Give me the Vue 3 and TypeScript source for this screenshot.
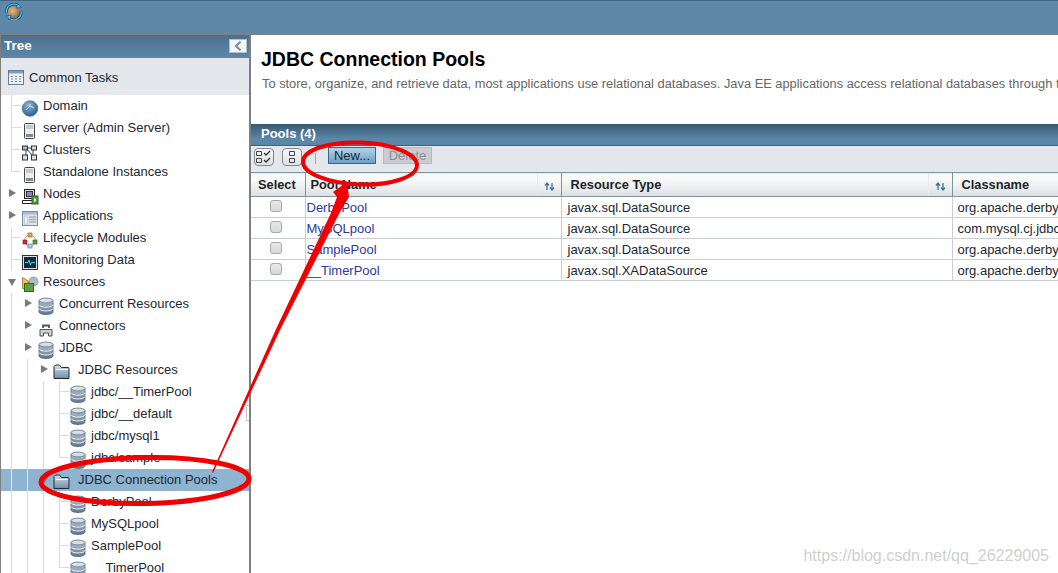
<script setup lang="ts">
type IconName = 'globe' | 'server' | 'cluster' | 'nodes' | 'apps' | 'life' | 'monitor' | 'res' | 'db' | 'conn' | 'folder'
interface TreeRow {
  label: string
  cells: string[]
  icon: IconName
  gap: number
  active?: boolean
}
const row = (label: string, cells: string, icon: IconName, gap = 4, active = false): TreeRow => ({
  label,
  cells: cells.split(''),
  icon,
  gap,
  active
})
const treeRows: TreeRow[] = [
  row('Domain', 'T', 'globe'),
  row('server (Admin Server)', 'T', 'server'),
  row('Clusters', 'T', 'cluster'),
  row('Standalone Instances', 'L', 'server'),
  row('Nodes', '>', 'nodes'),
  row('Applications', '>', 'apps'),
  row('Lifecycle Modules', 'T', 'life'),
  row('Monitoring Data', 'T', 'monitor'),
  row('Resources', 'v', 'res'),
  row('Concurrent Resources', '|>', 'db'),
  row('Connectors', '|>', 'conn'),
  row('JDBC', '|>', 'db'),
  row('JDBC Resources', '||>', 'folder', 7),
  row('jdbc/__TimerPool', '|||T', 'db'),
  row('jdbc/__default', '|||T', 'db'),
  row('jdbc/mysql1', '|||T', 'db'),
  row('jdbc/sample', '|||L', 'db'),
  row('JDBC Connection Pools', '||v', 'folder', 7, true),
  row('DerbyPool', '|||T', 'db'),
  row('MySQLpool', '|||T', 'db'),
  row('SamplePool', '|||T', 'db'),
  row('__TimerPool', '|||L', 'db')
]
const pools = [
  { name: 'DerbyPool', type: 'javax.sql.DataSource', cls: 'org.apache.derby.jdbc.ClientDataSource' },
  { name: 'MySQLpool', type: 'javax.sql.DataSource', cls: 'com.mysql.cj.jdbc.MysqlDataSource' },
  { name: 'SamplePool', type: 'javax.sql.DataSource', cls: 'org.apache.derby.jdbc.ClientDataSource' },
  { name: '__TimerPool', type: 'javax.sql.XADataSource', cls: 'org.apache.derby.jdbc.EmbeddedXADataSource' }
]
</script>

<template>
  <div class="page">
    <svg width="0" height="0" class="defs">
      <defs>
        <linearGradient id="dbg" x1="0" y1="0" x2="0" y2="1">
          <stop offset="0" stop-color="#b4c1ce" />
          <stop offset="1" stop-color="#5d7690" />
        </linearGradient>
        <linearGradient id="fold" x1="0" y1="0" x2="0" y2="1">
          <stop offset="0" stop-color="#d5dfe8" />
          <stop offset="1" stop-color="#6f8ca8" />
        </linearGradient>
        <radialGradient id="glob" cx="0.4" cy="0.3" r="0.8">
          <stop offset="0" stop-color="#8fb6d8" />
          <stop offset="1" stop-color="#1f5384" />
        </radialGradient>
        <radialGradient id="logo" cx="0.4" cy="0.4" r="0.7">
          <stop offset="0" stop-color="#e6bb86" />
          <stop offset="1" stop-color="#8f6238" />
        </radialGradient>
      </defs>
    </svg>

    <header class="topbar">
      <svg class="logo" width="18" height="17" viewBox="0 0 18 17">
        <circle cx="8.500" cy="9" r="6" fill="url(#logo)" />
        <path d="M1.500 10A7.500 7.500 0 0 1 13.500 2.800" fill="none" stroke="#123f66" stroke-width="2.600" />
        <path d="M16 8A7.500 7.500 0 0 1 4 15.200" fill="none" stroke="#123f66" stroke-width="2.600" />
        <path d="M1.500 10A7.500 7.500 0 0 1 13.500 2.800" fill="none" stroke="#4fc0f2" stroke-width="1.300" />
        <path d="M16 8A7.500 7.500 0 0 1 4 15.200" fill="none" stroke="#4fc0f2" stroke-width="1.300" />
        <path d="M12.500 .5l4 4-5 .5zM5 16.800l-4-4 5-.5z" fill="#4fc0f2" stroke="#123f66" stroke-width=".5" />
      </svg>
    </header>

    <div class="main">
      <aside class="side">
        <div class="tree-head">
          <span>Tree</span>
          <button class="collapse" type="button">
            <svg width="8" height="10" viewBox="0 0 8 10"><path d="M6.500 .8L2 5l4.500 4.200" fill="none" stroke="#7d8790" stroke-width="2" /></svg>
          </button>
        </div>
        <div class="tasks">
          <svg width="16" height="15" viewBox="0 0 16 15">
            <rect x=".5" y=".5" width="15" height="14" fill="#eef1f4" stroke="#5f7f9c" />
            <rect x="1" y="1" width="14" height="2.500" fill="#7f9db8" />
            <path d="M3 6.500h2M7 6.500h2M11 6.500h2M3 9h2M7 9h2M11 9h2M3 11.500h2M7 11.500h2M11 11.500h2" stroke="#7b8794" stroke-width="1" />
          </svg>
          <span>Common Tasks</span>
        </div>
        <div class="tree">
          <div v-for="r in treeRows" :key="r.label" class="node" :class="{ active: r.active }">
            <span v-for="(c, i) in r.cells" :key="i" class="cell" :class="{
              vline: c === '|' || c === 'T',
              vend: c === 'L',
              stub: c === 'T' || c === 'L'
            }">
              <i v-if="c === '>'" class="arrow right"></i>
              <i v-else-if="c === 'v'" class="arrow down"></i>
            </span>
            <svg class="ico" :class="r.icon" width="18" height="18" viewBox="0 0 18 18">
              <template v-if="r.icon === 'globe'">
                <circle cx="9" cy="9.500" r="7.800" fill="url(#glob)" stroke="#33607f" stroke-width=".6" />
                <path d="M5 11l4-4 4 2M9 7v-2" fill="none" stroke="#cfe0ee" stroke-width="1" />
              </template>
              <template v-else-if="r.icon === 'server'">
                <rect x="3.500" y="2.500" width="10" height="15" rx="1" fill="#eceff1" stroke="#444" />
                <path d="M5 5h7M5 7h7" stroke="#9aa3aa" />
                <path d="M5 13h7v3H5z" fill="#7f8991" />
              </template>
              <template v-else-if="r.icon === 'cluster'">
                <path d="M5 5h7M5 5v8M5 5l7 8v-8" fill="none" stroke="#444" />
                <rect x="1.500" y="3" width="5" height="4" fill="#8fc0e8" stroke="#333" />
                <rect x="10.500" y="3" width="5" height="4" fill="#d8dee4" stroke="#333" />
                <rect x="1.500" y="12" width="5" height="5" fill="#d8dee4" stroke="#333" />
                <rect x="10.500" y="12" width="5" height="5" fill="#d8dee4" stroke="#333" />
              </template>
              <template v-else-if="r.icon === 'nodes'">
                <rect x="3.500" y="2.500" width="10" height="9" fill="#d8dce6" stroke="#222" />
                <rect x="5.500" y="4.500" width="6" height="5" fill="#8c86c0" stroke="#333" />
                <path d="M1.500 13.500h11v3h-11z" fill="#fff" stroke="#222" />
                <rect x="11" y="9" width="6" height="8" fill="#4f9f3f" stroke="#2a5f20" />
                <path d="M13 11l2.500 2-2.500 2z" fill="#fff" />
              </template>
              <template v-else-if="r.icon === 'apps'">
                <rect x="1.500" y="2.500" width="15" height="14" fill="#dfe5ec" stroke="#7890a6" />
                <rect x="2" y="3" width="14" height="2.500" fill="#a9bccd" />
                <rect x="3.500" y="7" width="3" height="8" fill="#f0f3f6" stroke="#a9b7c4" stroke-width=".6" />
                <path d="M8 8h7M8 10.500h7M8 13h7" stroke="#a3b3c2" stroke-width="1.400" />
              </template>
              <template v-else-if="r.icon === 'life'">
                <circle cx="9" cy="9.500" r="5.500" fill="none" stroke="#9aa3aa" stroke-width="1" />
                <rect x="7" y="2" width="4" height="4" fill="#e8a83a" stroke="#7a5a20" stroke-width=".6" />
                <rect x="2" y="9" width="4" height="4" fill="#cf2f2f" stroke="#701818" stroke-width=".6" />
                <rect x="12" y="9" width="4" height="4" fill="#4f9f3f" stroke="#2a5f20" stroke-width=".6" />
                <rect x="7" y="13" width="4" height="4" fill="#b8cee4" stroke="#4f6f8f" stroke-width=".6" />
              </template>
              <template v-else-if="r.icon === 'monitor'">
                <rect x="1.500" y="2.500" width="15" height="14" fill="#e0e3e6" stroke="#333" />
                <rect x="3" y="4" width="12" height="11" fill="#102c3a" />
                <path d="M4 9.500h3l1-2.500 1.500 5 1-2.500H14" fill="none" stroke="#3fd4e0" stroke-width="1" />
              </template>
              <template v-else-if="r.icon === 'res'">
                <path d="M1.500 2.500v11h3l2-6h3z" fill="#f0c060" stroke="#9a7020" stroke-width=".8" />
                <circle cx="12.500" cy="6.500" r="4.500" fill="#a8bccb" stroke="#6a8090" stroke-width=".6" />
                <rect x="3.500" y="8.500" width="9" height="8" fill="#5da03d" stroke="#2e6a1e" />
              </template>
              <template v-else-if="r.icon === 'db'">
                <path d="M2 3.500V15c0 1.300 3 2.500 7 2.500s7-1.200 7-2.500V3.500z" fill="url(#dbg)" stroke="#4f6376" stroke-width=".8" />
                <ellipse cx="9" cy="3.500" rx="7" ry="2.400" fill="#d7dfe7" stroke="#5f7284" stroke-width=".8" />
                <path d="M2 7.600c0 1.300 3 2.500 7 2.500s7-1.200 7-2.500M2 11.400c0 1.300 3 2.500 7 2.500s7-1.200 7-2.500" fill="none" stroke="#f2f5f7" stroke-width="1" />
              </template>
              <template v-else-if="r.icon === 'conn'">
                <path d="M6 9V6.500h6V9" fill="none" stroke="#555" stroke-width="1.800" />
                <path d="M3 17V10.500h12V17h-3.500V14h-5v3z" fill="#cdd3d9" stroke="#444" stroke-width=".9" />
              </template>
              <template v-else>
                <path d="M1 15.500V3.500l1.500-1.500h4l2 2.500h6.500a1 1 0 0 1 1 1v10z" fill="url(#fold)" stroke="#202a34" stroke-width="1" />
                <path d="M2.500 6.500h12.500" stroke="#f2f5f8" stroke-width="1" />
              </template>
            </svg>
            <span class="lbl" :style="{ marginLeft: r.gap + 'px' }">{{ r.label }}</span>
          </div>
        </div>
        <span class="grip"></span>
      </aside>

      <section class="content">
        <div class="title-block">
          <h1>JDBC Connection Pools</h1>
          <p>To store, organize, and retrieve data, most applications use relational databases. Java EE applications access relational databases through the JDBC API.</p>
        </div>
        <div class="pools-bar">Pools (4)</div>
        <div class="toolbar">
          <button class="tool" type="button">
            <svg width="16" height="14" viewBox="0 0 16 14">
              <path d="M.5 1.500h5v4h-5zM.5 8.500h5v4h-5z" fill="none" stroke="#444" />
              <path d="M8 3l2 2 4-4M8 10l2 2 4-4" fill="none" stroke="#333" stroke-width="1.300" />
            </svg>
          </button>
          <button class="tool narrow" type="button">
            <svg width="8" height="14" viewBox="0 0 8 14"><path d="M1.500 1.500h5v4h-5zM1.500 8.500h5v4h-5z" fill="none" stroke="#444" /></svg>
          </button>
          <span class="sep"></span>
          <button class="btn primary" type="button">New...</button>
          <button class="btn disabled" type="button">Delete</button>
        </div>
        <table class="grid">
          <colgroup>
            <col class="c1" /><col class="c2" /><col class="c3" /><col class="c4" />
          </colgroup>
          <thead>
            <tr>
              <th class="sel">Select</th>
              <th class="pool"><div class="thc"><span>Pool Name</span><em class="sort"><svg width="11" height="9" viewBox="0 0 11 9"><path d="M3 8V2M1 3.500L3 1l2 2.500M8 1v6M6 5.500L8 8l2-2.500" fill="none" stroke="#3f6f9f" stroke-width="1.300" /></svg></em></div></th>
              <th><div class="thc"><span>Resource Type</span><em class="sort"><svg width="11" height="9" viewBox="0 0 11 9"><path d="M3 8V2M1 3.500L3 1l2 2.500M8 1v6M6 5.500L8 8l2-2.500" fill="none" stroke="#3f6f9f" stroke-width="1.300" /></svg></em></div></th>
              <th>Classname</th>
            </tr>
          </thead>
          <tbody>
            <tr v-for="p in pools" :key="p.name">
              <td class="sel"><input type="checkbox" class="check" /></td>
              <td class="pool"><a class="link">{{ p.name }}</a></td>
              <td class="type">{{ p.type }}</td>
              <td>{{ p.cls }}</td>
            </tr>
          </tbody>
        </table>
      </section>
    </div>

    <svg class="marks" width="1058" height="573" viewBox="0 0 1058 573">
      <ellipse cx="145" cy="480.500" rx="104" ry="23" fill="none" stroke="#f00000" stroke-width="5" transform="rotate(-1 145 480)" />
      <ellipse cx="360" cy="163.500" rx="57" ry="21" fill="none" stroke="#f00000" stroke-width="4" transform="rotate(2 360 163)" />
      <path d="M212 472L277 327L331 213L337 197L333 192L347 182L349 197L340 212L280 330L213 473Z" fill="#f00000" />
    </svg>
    <span class="watermark">https://blog.csdn.net/qq_26229005</span>
  </div>
</template>

<style scoped>
.page {
  position: relative;
  width: 1058px;
  height: 573px;
  overflow: hidden;
  display: flex;
  flex-direction: column;
  font-family: "Liberation Sans", Arial, sans-serif;
  font-size: 13px;
  color: #1c2733;
  background: #fff;
}
.defs { position: absolute; }
.topbar {
  flex: none;
  background: #5f88a8;
  border-top: 1px solid #3f6785;
  border-bottom: 2px solid #7f7f7f;
  height: 32px;
  padding-left: 5px;
}
.logo { display: block; margin-top: 2px; }
.main { flex: 1; display: flex; min-height: 0; }
.side {
  position: relative;
  width: 248px;
  flex: none;
  border-left: 1px solid #7f7f7f;
  border-right: 2px solid #7f7f7f;
  overflow: hidden;
}
.tree-head {
  height: 23px;
  background: linear-gradient(#4c708e, #5c87a9);
  color: #fff;
  font-weight: 700;
  font-size: 13.500px;
  display: flex;
  align-items: center;
  justify-content: space-between;
  padding: 0 2px 2px 3px;
  box-sizing: border-box;
}
.collapse {
  width: 18px;
  height: 14px;
  padding: 0;
  background: #f4f5f6;
  border: 1px solid #b6bec6;
  display: flex;
  align-items: center;
  justify-content: center;
}
.tasks {
  height: 37px;
  background: #e4e7ec;
  display: flex;
  align-items: center;
  gap: 5px;
  padding: 1px 0 0 7px;
  box-sizing: border-box;
  font-size: 13px;
}
.tree { display: flex; flex-direction: column; }
.node {
  height: 22px;
  flex: none;
  display: flex;
  align-items: center;
  padding-left: 2px;
  white-space: nowrap;
}
.node.active { background: #8fb4cf; }
.cell {
  position: relative;
  width: 16px;
  height: 22px;
  flex: none;
}
.vline::before,
.vend::before {
  content: "";
  position: absolute;
  left: 8px;
  top: 0;
  bottom: 0;
  width: 1px;
  background: #d8dcdf;
}
.vend::before { bottom: 11px; }
.stub::after {
  content: "";
  position: absolute;
  left: 9px;
  top: 10px;
  width: 9px;
  height: 1px;
  background: #d8dcdf;
}
.active .vline::before { background: #dfe8ef; }
.arrow { position: absolute; width: 0; height: 0; border-style: solid; border-color: transparent; }
.arrow.right {
  left: 6px;
  top: 6px;
  border-width: 4px 0 4px 7px;
  border-left-color: #7a7a7a;
}
.arrow.down {
  left: 5px;
  top: 8px;
  border-width: 7px 4px 0 4px;
  border-top-color: #7a7a7a;
}
.ico { flex: none; margin: 3px 0 0 2px; }
.lbl { flex: none; margin-bottom: 2px; }
.grip {
  position: absolute;
  right: 0;
  top: 370px;
  width: 3px;
  height: 16px;
  border: 1px solid #c4c8cc;
  border-right: 0;
  box-sizing: border-box;
}
.content { flex: 1; min-width: 0; overflow: hidden; display: flex; flex-direction: column; }
.title-block { height: 89px; flex: none; box-sizing: border-box; padding: 12px 0 0 10px; white-space: nowrap; }
h1 { margin: 0; font-size: 19.500px; line-height: 24px; color: #000; font-weight: 700; }
.title-block p { margin: 5px 0 0 1px; font-size: 12.850px; line-height: 16px; color: #666; }
.pools-bar {
  height: 22px;
  flex: none;
  background: linear-gradient(#375a73, #5a86a7 70%, #5a86a7);
  border-bottom: 1px solid #3f6178;
  box-sizing: border-box;
  color: #fff;
  font-weight: 700;
  font-size: 13px;
  line-height: 20px;
  padding-left: 10px;
}
.toolbar {
  height: 26px;
  flex: none;
  background: #e4e7ec;
  display: flex;
  align-items: flex-start;
  padding: 1px 0 0 3px;
  box-sizing: border-box;
}
.tool {
  width: 20px;
  height: 18px;
  margin-top: 1px;
  padding: 0;
  background: linear-gradient(#f6f7f8, #dfe2e6);
  border: 1px solid #85888c;
  border-radius: 4px;
  display: flex;
  align-items: center;
  justify-content: center;
  margin-right: 8px;
}
.tool.narrow { margin-right: 0; }
.sep { width: 1px; height: 11px; margin: 6px 0 0 13px; background: #a2a6aa; }
.btn {
  font: 13px "Liberation Sans", Arial, sans-serif;
  height: 17px;
  padding: 0;
  box-sizing: border-box;
  line-height: 14px;
}
.btn.primary {
  width: 48px;
  margin-left: 12px;
  background: linear-gradient(#b3d4ea, #6d9fc6);
  border: 1px solid #3c6788;
  color: #1c2733;
}
.btn.disabled {
  width: 49px;
  margin-left: 7px;
  background: #c9cdd2;
  border: 1px solid #b6babe;
  color: #8d8f92;
}
.grid { border-collapse: collapse; table-layout: fixed; width: 900px; }
.c1 { width: 54px; }
.c2 { width: 256px; }
.c3 { width: 391px; }
.c4 { width: 199px; }
th {
  height: 24px;
  padding: 0 0 0 9px;
  box-sizing: border-box;
  text-align: left;
  font-size: 12.800px;
  font-weight: 700;
  color: #1c2328;
  background: linear-gradient(#f6f7f8, #fafafb 25%, #dcdfe3);
  border-top: 1px solid #7e939f;
  border-bottom: 1px solid #7e939f;
  border-right: 1px solid #7e939f;
  white-space: nowrap;
}
th.sel { padding-left: 7px; }
th.pool { padding-left: 5px; }
.thc { display: flex; align-items: center; justify-content: space-between; height: 22px; }
.sort {
  width: 24px;
  height: 22px;
  border-left: 1px solid #e8eaec;
  display: flex;
  align-items: center;
  justify-content: center;
  padding-top: 4px;
  box-sizing: border-box;
}
td {
  height: 21px;
  padding: 0 0 0 5px;
  box-sizing: border-box;
  font-size: 13px;
  color: #1c2733;
  border-bottom: 1px solid #c8ced3;
  border-right: 1px solid #c8ced3;
  white-space: nowrap;
  overflow: hidden;
}
td.pool { padding-left: 1px; }
td.type { padding-left: 6px; }
td.sel { padding: 0; text-align: center; }
.link { color: #2a3a9c; }
.check {
  appearance: none;
  display: block;
  width: 12px;
  height: 12px;
  margin: 0 auto 2px 19px;
  background: linear-gradient(#e8e8e8, #d8d8d8);
  border: 1px solid #a9a9a9;
  border-radius: 3px;
}
.marks { position: absolute; left: 0; top: 0; pointer-events: none; }
.watermark {
  position: absolute;
  right: 9px;
  bottom: 8px;
  font-size: 16px;
  color: rgba(190, 190, 190, .75);
}
</style>

<style>
html, body { margin: 0; overflow: hidden; background: #fff; }
</style>
